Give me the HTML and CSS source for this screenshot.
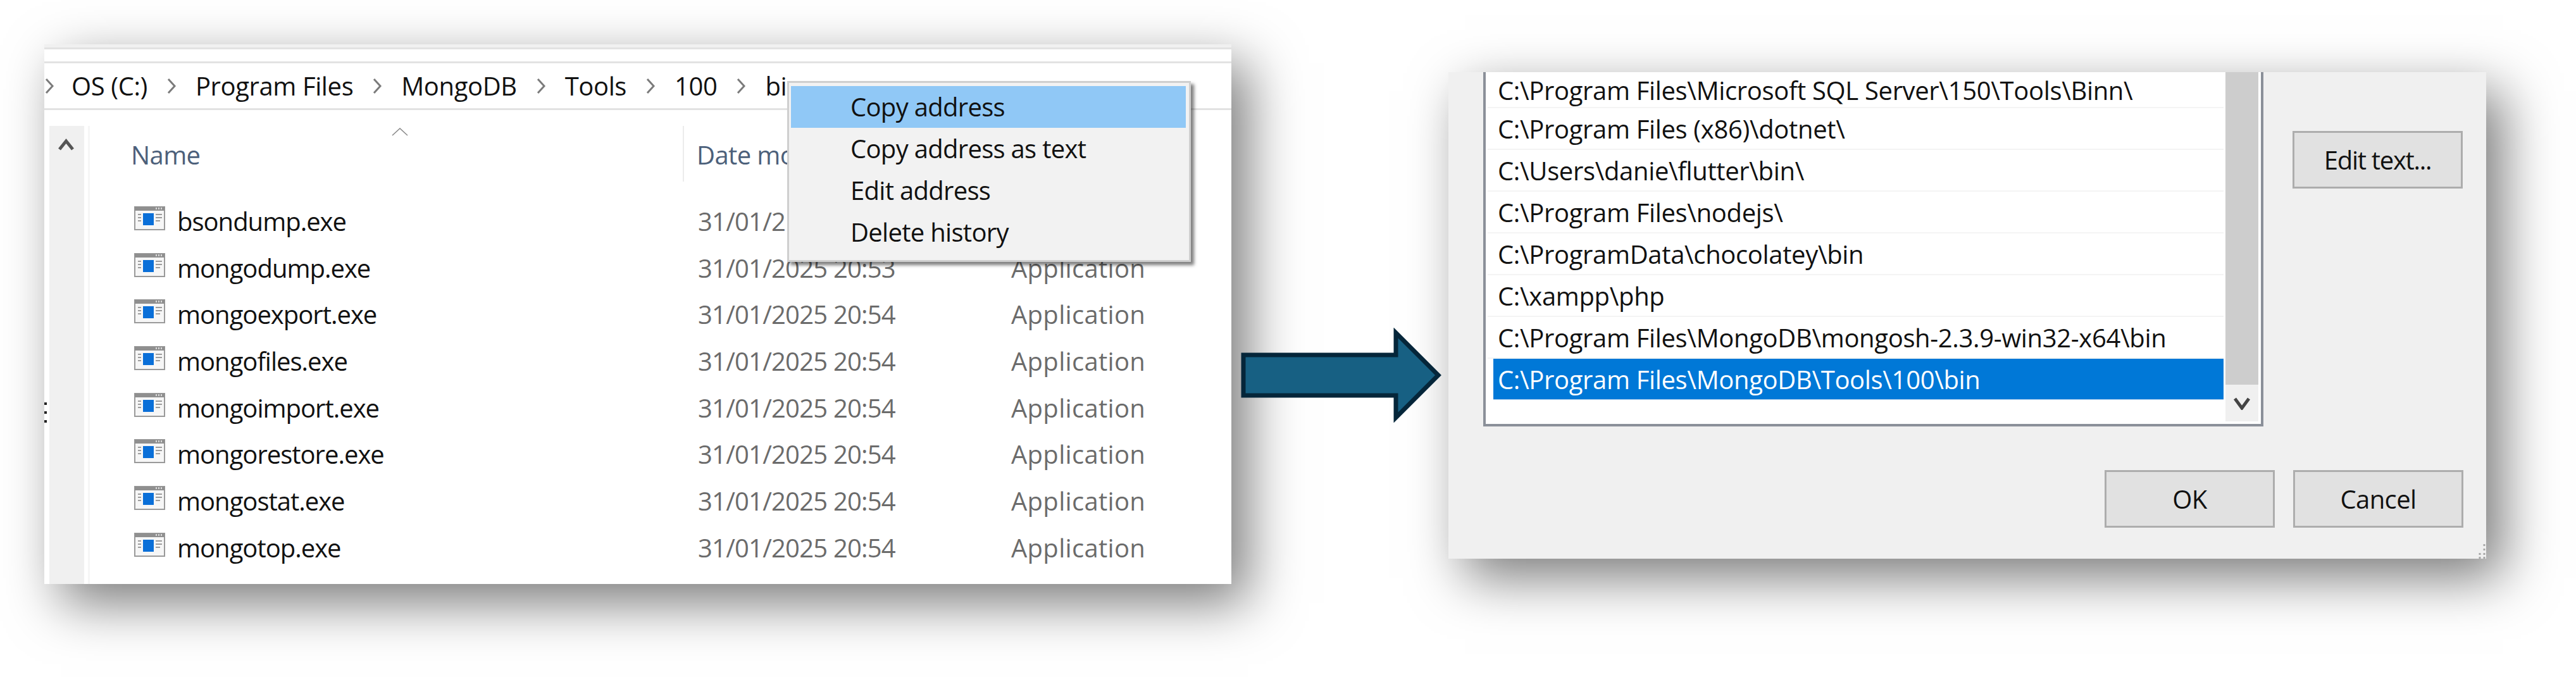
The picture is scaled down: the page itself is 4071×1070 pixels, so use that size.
FILE: index.html
```html
<!DOCTYPE html>
<html lang="en">
<head>
    <meta charset="UTF-8">
    <title>MongoDB Tools path</title>
    <link rel="stylesheet" href="styles.css">
</head>
<body>

    <svg class="defs" width="0" height="0">
        <symbol id="exe" viewBox="0 0 49 38">
            <rect x="1" y="1" width="47" height="36" fill="#f6f6f6" stroke="#9a9a9a" stroke-width="2"/>
            <rect x="1" y="1" width="47" height="6" fill="#8f8f8f"/>
            <rect x="34" y="2" width="2" height="3" fill="#d8d8d8"/>
            <rect x="38" y="2" width="2" height="3" fill="#d8d8d8"/>
            <rect x="42" y="2" width="2" height="3" fill="#d8d8d8"/>
            <rect x="14" y="11" width="17" height="19" fill="#0a6fd8"/>
            <path d="M6 13h5M6 18h5M6 23h5M34 13h10M34 18h10M34 23h7" stroke="#9c9c9c" stroke-width="2"/>
        </symbol>
        <symbol id="chev" viewBox="0 0 16 24">
            <path d="M3 1l10 11L3 23" fill="none" stroke="#7b7b7b" stroke-width="3"/>
        </symbol>
    </svg>

    <div class="page">

        <div class="explorer">
            <div class="strip"></div>
            <div class="crumbs">
                <svg class="chev"><use href="#chev"/></svg><span>OS (C:)</span>
                <svg class="chev"><use href="#chev"/></svg><span>Program Files</span>
                <svg class="chev"><use href="#chev"/></svg><span>MongoDB</span>
                <svg class="chev"><use href="#chev"/></svg><span>Tools</span>
                <svg class="chev"><use href="#chev"/></svg><span>100</span>
                <svg class="chev"><use href="#chev"/></svg><span>bi</span>
            </div>

            <div class="browser">
                <div class="side-scroll">
                    <svg class="side-up" viewBox="0 0 27 19"><path d="M3 17L13.5 4 24 17" fill="none" stroke="#555" stroke-width="5"/></svg>
                </div>
                <div class="files">
                    <div class="file-head">
                        <div class="col-name">Name</div>
                        <div class="col-date">Date mo</div>
                        <svg class="sort-caret" viewBox="0 0 26 13"><path d="M1 12L13 1l12 11" fill="none" stroke="#8a8a8a" stroke-width="1.6"/></svg>
                    </div>
                    <div class="file-row"><div class="file-name"><svg class="exe"><use href="#exe"/></svg>bsondump.exe</div><div class="file-date">31/01/2</div><div class="file-type"></div></div>
                    <div class="file-row"><div class="file-name"><svg class="exe"><use href="#exe"/></svg>mongodump.exe</div><div class="file-date">31/01/2025 20:53</div><div class="file-type">Application</div></div>
                    <div class="file-row"><div class="file-name"><svg class="exe"><use href="#exe"/></svg>mongoexport.exe</div><div class="file-date">31/01/2025 20:54</div><div class="file-type">Application</div></div>
                    <div class="file-row"><div class="file-name"><svg class="exe"><use href="#exe"/></svg>mongofiles.exe</div><div class="file-date">31/01/2025 20:54</div><div class="file-type">Application</div></div>
                    <div class="file-row"><div class="file-name"><svg class="exe"><use href="#exe"/></svg>mongoimport.exe</div><div class="file-date">31/01/2025 20:54</div><div class="file-type">Application</div></div>
                    <div class="file-row"><div class="file-name"><svg class="exe"><use href="#exe"/></svg>mongorestore.exe</div><div class="file-date">31/01/2025 20:54</div><div class="file-type">Application</div></div>
                    <div class="file-row"><div class="file-name"><svg class="exe"><use href="#exe"/></svg>mongostat.exe</div><div class="file-date">31/01/2025 20:54</div><div class="file-type">Application</div></div>
                    <div class="file-row"><div class="file-name"><svg class="exe"><use href="#exe"/></svg>mongotop.exe</div><div class="file-date">31/01/2025 20:54</div><div class="file-type">Application</div></div>
                </div>
            </div>

            <div class="edge-dots"><i></i><i></i><i></i></div>

            <div class="menu">
                <div class="menu-item active">Copy address</div>
                <div class="menu-item">Copy address as text</div>
                <div class="menu-item">Edit address</div>
                <div class="menu-item">Delete history</div>
            </div>
        </div>

        <svg class="arrow" viewBox="0 0 322 150">
            <path d="M7 43H248V8L315 75 248 142V107H7Z" fill="#176083" stroke="#05263a" stroke-width="7"/>
        </svg>

        <div class="dialog">
            <div class="dialog-main">
                <div class="path-box">
                    <div class="paths">
                        <div class="path first">C:\Program Files\Microsoft SQL Server\150\Tools\Binn\</div>
                        <div class="path">C:\Program Files (x86)\dotnet\</div>
                        <div class="path">C:\Users\danie\flutter\bin\</div>
                        <div class="path">C:\Program Files\nodejs\</div>
                        <div class="path">C:\ProgramData\chocolatey\bin</div>
                        <div class="path">C:\xampp\php</div>
                        <div class="path">C:\Program Files\MongoDB\mongosh-2.3.9-win32-x64\bin</div>
                        <div class="path selected">C:\Program Files\MongoDB\Tools\100\bin</div>
                    </div>
                    <div class="path-scroll">
                        <div class="path-thumb"></div>
                        <svg class="path-down" viewBox="0 0 28 20"><path d="M3 2l11 15L25 2" fill="none" stroke="#444" stroke-width="5"/></svg>
                    </div>
                </div>
                <button class="btn btn-edit">Edit text...</button>
            </div>
            <div class="dialog-actions">
                <button class="btn">OK</button>
                <button class="btn">Cancel</button>
            </div>
            <svg class="grip" viewBox="0 0 12 24"><path d="M9 1v3M9 8v3M9 15v3M9 21v3M2 15v3M2 21v3" stroke="#a8a8a8" stroke-width="3"/></svg>
        </div>

    </div>

</body>
</html>
```

FILE: styles.css
```css
html, body {
    margin: 0;
    height: 1070px;
    overflow: hidden;
    background: #fff;
}
body {
    font-family: "Open Sans", sans-serif;
    font-size: 40px;
    line-height: 54px;
    letter-spacing: -0.6px;
    color: #111;
}
.defs {
    position: absolute;
}
.page {
    display: flex;
    align-items: flex-start;
    padding-left: 70px;
}

/* file explorer */
.explorer {
    position: relative;
    width: 1876px;
    height: 853px;
    margin-top: 70px;
    background: #fff;
    box-shadow: 26px 30px 80px rgba(0,0,0,0.52);
    flex: none;
}
.strip {
    height: 22px;
    border-top: 5px solid #f0f0f0;
    border-bottom: 3px solid #e2e2e2;
    box-shadow: inset 0 3px 0 #e2e2e2;
}
.crumbs {
    display: flex;
    align-items: center;
    gap: 30px;
    height: 71px;
    border-bottom: 3px solid #e2e2e2;
    overflow: hidden;
    white-space: nowrap;
    letter-spacing: -0.4px;
}
.chev {
    width: 16px;
    height: 24px;
    flex: none;
}
.crumbs .chev:first-child {
    margin-right: -3px;
}
.browser {
    display: flex;
    height: 724px;
    padding-top: 25px;
    padding-left: 8px;
}
.side-scroll {
    width: 55px;
    background: #f0f0f0;
    flex: none;
    height: 724px;
}
.side-up {
    display: block;
    width: 27px;
    height: 19px;
    margin: 20px 0 0 13px;
}
.files {
    position: relative;
    flex: 1;
    margin-left: 6px;
    height: 724px;
    border-left: 3px solid #f6f6f6;
}
.file-head {
    display: grid;
    grid-template-columns: 937px 1fr;
    height: 88px;
    margin-bottom: 26px;
}
.col-name {
    padding: 19px 0 0 65px;
    color: #4c607a;
}
.col-date {
    padding: 19px 0 0 20px;
    border-left: 2px solid #ececec;
    color: #4c607a;
}
.sort-caret {
    position: absolute;
    left: 477px;
    top: 3px;
    width: 26px;
    height: 13px;
}
.file-row {
    display: grid;
    grid-template-columns: 961px 495px 1fr;
    align-items: center;
    height: 73.7px;
}
.file-name {
    display: flex;
    align-items: center;
    gap: 19px;
    padding-left: 70px;
    color: #111;
    letter-spacing: -1px;
}
.exe {
    width: 49px;
    height: 38px;
    flex: none;
    margin-top: -10px;
}
.file-date, .file-type {
    color: #6b6b6b;
}
.file-date {
    letter-spacing: -0.8px;
}
.file-type {
    letter-spacing: 0.3px;
}
.edge-dots {
    position: absolute;
    left: 0;
    top: 566px;
    display: flex;
    flex-direction: column;
    gap: 10px;
}
.edge-dots i {
    display: block;
    width: 4px;
    height: 4px;
    background: #222;
}

/* address bar context menu */
.menu {
    position: absolute;
    left: 1174px;
    top: 58px;
    width: 624px;
    height: 272px;
    padding: 5px 5px 3px 3px;
    background: #f2f2f2;
    border: 3px solid #cfcfcf;
    box-shadow: 5px 5px 5px rgba(0,0,0,0.5);
}
.menu-item {
    display: flex;
    align-items: center;
    height: 66px;
    padding-left: 94px;
    letter-spacing: -0.7px;
}
.menu-item.active {
    background: #90c8f6;
}

/* arrow between the two shots */
.arrow {
    width: 322px;
    height: 150px;
    margin: 518px 0 0 12px;
    flex: none;
    z-index: 1;
}

/* environment variable dialog */
.dialog {
    position: relative;
    width: 1640px;
    height: 769px;
    margin: 114px 0 0 9px;
    background: #f0f0f0;
    box-shadow: 26px 30px 80px rgba(0,0,0,0.52);
    flex: none;
}
.dialog-main {
    display: flex;
    align-items: flex-start;
    height: 560px;
    padding-left: 55px;
}
.path-box {
    display: flex;
    width: 1225px;
    height: 556px;
    background: #fff;
    border: 4px solid #8b9099;
    border-top: 0;
    flex: none;
}
.paths {
    flex: 1;
    letter-spacing: -0.35px;
}
.path {
    display: flex;
    align-items: center;
    height: 64px;
    margin-left: 3px;
    padding: 2px 0 0 16px;
    box-sizing: content-box;
    border-bottom: 2px solid #f4f4f4;
    white-space: nowrap;
}
.path:not(.first) {
    height: 62px;
}
.path.first {
    height: 53px;
}
.path.selected {
    margin-left: 12px;
    padding-left: 7px;
    color: #fff;
    background: #0078d7;
    border-bottom: 1px solid #b8d4ee;
}
.path-scroll {
    width: 52px;
    height: 552px;
    margin: 0 4px 0 3px;
    background: #f0f0f0;
    flex: none;
}
.path-thumb {
    height: 494px;
    background: #cdcdcd;
}
.path-down {
    display: block;
    width: 28px;
    height: 20px;
    margin: 20px 0 0 12px;
}
.btn {
    display: block;
    width: 269px;
    height: 91px;
    padding: 0;
    background: #e1e1e1;
    border: 3px solid #adadad;
    font: inherit;
    letter-spacing: inherit;
    color: #111;
}
.btn-edit {
    margin: 93px 0 0 46px;
    letter-spacing: -1.3px;
}
.dialog-actions {
    display: flex;
    justify-content: flex-end;
    gap: 29px;
    padding: 69px 36px 0 0;
}
.grip {
    position: absolute;
    right: 0;
    bottom: 0;
    width: 12px;
    height: 24px;
}
```
